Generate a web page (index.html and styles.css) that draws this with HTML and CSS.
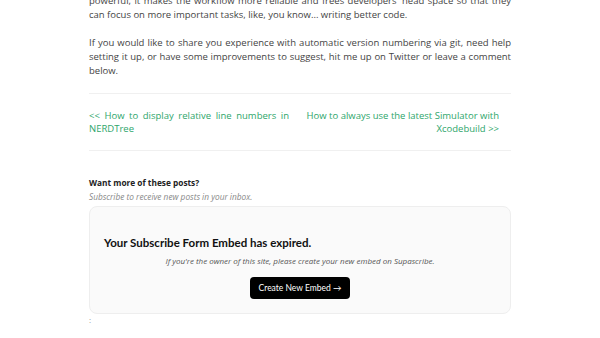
FILE: index.html
```html
<!DOCTYPE html>
<html>
<head>
<meta charset="utf-8">
<link rel="stylesheet" href="styles.css">
</head>
<body>
<main class="post">
  <p class="para">powerful, it makes the workflow more reliable and frees developers' head space so that they can focus on more important tasks, like, you know... writing better code.</p>
  <p class="para">If you would like to share you experience with automatic version numbering via git, need help setting it up, or have some improvements to suggest, hit me up on Twitter or leave a comment below.</p>
  <hr class="rule">
  <nav class="postnav">
    <a class="prev" href="#">&lt;&lt; How to display relative line numbers in NERDTree</a>
    <a class="next" href="#">How to always use the latest Simulator with Xcodebuild &gt;&gt;</a>
  </nav>
  <hr class="rule">
  <section class="subscribe">
    <h4 class="sub-title">Want more of these posts?</h4>
    <p class="sub-desc">Subscribe to receive new posts in your inbox.</p>
    <div class="embed">
      <h3 class="embed-title">Your Subscribe Form Embed has expired.</h3>
      <p class="embed-note">If you're the owner of this site, please create your new embed on Supascribe.</p>
      <a class="embed-btn" href="#">Create New Embed →</a>
    </div>
    <p class="colon">:</p>
  </section>
</main>
</body>
</html>
```
FILE: styles.css
```css
html, body { margin: 0; padding: 0; background: #fff; }
body { font-family: "Open Sans", "Liberation Sans", sans-serif; color: #444; }
.post { width: 422px; margin-left: 89px; margin-top: -6px; }
.para { font-size: 9.5px; line-height: 14px; margin: 0 0 14px; text-align: justify; }
.rule { border: 0; border-top: 1px solid #f0f0f0; margin: 15px 0 0; }
.postnav { display: grid; grid-template-columns: 200px 196px; column-gap: 14px; padding: 15px 0 15px; }
.postnav a { color: #2ea66b; text-decoration: none; font-size: 9.5px; line-height: 13px; }
.prev { text-align: justify; }
.next { text-align: right; }
.postnav + .rule { margin-top: 0; }
.subscribe { padding-top: 25px; }
.sub-title { font-size: 8.3px; line-height: 14px; font-weight: 700; color: #222; margin: 0; }
.sub-desc { font-size: 8.3px; line-height: 14px; font-style: italic; color: #888; margin: 0 0 2px; }
.embed { background: #fafafa; border: 1px solid #eeeeee; border-radius: 8px; padding: 28px 14px 14px; display: flex; flex-direction: column; align-items: center; }
.embed-title { align-self: flex-start; margin: 0; font-family: Lato, "Open Sans", sans-serif; font-size: 11.5px; line-height: 16px; font-weight: 700; color: #111; }
.embed-note { margin: 4px 0 0; font-family: "Open Sans", sans-serif; font-size: 8px; line-height: 12px; font-style: italic; color: #555; }
.embed-btn { margin-top: 10px; width: 100px; height: 22px; box-sizing: border-box; background: #000; color: #fff; border-radius: 4px; font-family: Lato, "Open Sans", sans-serif; font-size: 8.5px; line-height: 22px; text-align: center; text-decoration: none; }
.colon { margin: 1px 0 0; font-size: 8px; line-height: 10px; color: #999; }
```
